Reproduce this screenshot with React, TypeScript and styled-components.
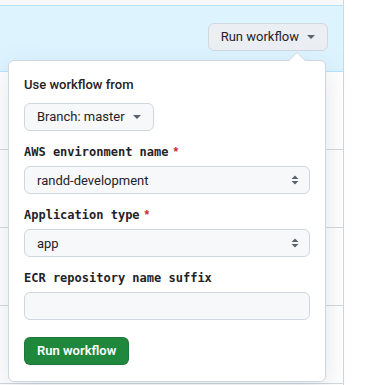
import { FC } from "react";
import styled, { createGlobalStyle } from "styled-components";

const GlobalStyle = createGlobalStyle`
  html, body {
    margin: 0;
    padding: 0;
    background: #ffffff;
  }
  body {
    font-family: Roboto, "Liberation Sans", Arial, sans-serif;
    color: #1f2328;
    font-size: 13px;
  }
`;

const colors = {
  border: "#d0d7de",
  subtle: "#f6f8fa",
  highlight: "#ddf4ff",
  highlightBorder: "#b6e3ff",
  text: "#1f2328",
  danger: "#d1242f",
  green: "#1f883d",
};

const Page = styled.div`
  display: flex;
  width: 376px;
  height: 385px;
  overflow: hidden;
`;

const Box = styled.div`
  width: 343px;
  border-right: 1px solid ${colors.border};
  display: flex;
  flex-direction: column;
`;

const BoxHeader = styled.div`
  height: 5px;
  background: ${colors.subtle};
  border-bottom: 1px solid ${colors.highlightBorder};
`;

const HighlightRow = styled.div`
  position: relative;
  height: 66px;
  box-sizing: border-box;
  background: ${colors.highlight};
  border-bottom: 1px solid ${colors.highlightBorder};
  display: flex;
  justify-content: flex-end;
  align-items: flex-start;
  padding: 17px 15px 0 0;
`;

const Row = styled.div`
  height: 77px;
  border-bottom: 1px solid ${colors.border};
`;

const Caret = styled.span`
  display: inline-block;
  width: 0;
  height: 0;
  border-left: 4px solid transparent;
  border-right: 4px solid transparent;
  border-top: 4px solid #59636e;
  margin-left: 8px;
`;

const Button = styled.button<{ $variant?: "default" | "primary" | "onHighlight" }>`
  display: inline-flex;
  align-items: center;
  height: 28px;
  padding: 0 12px;
  box-sizing: border-box;
  border-radius: 6px;
  font-family: inherit;
  font-size: 13px;
  line-height: 20px;
  cursor: pointer;
  color: ${({ $variant }) => ($variant === "primary" ? "#ffffff" : colors.text)};
  font-weight: ${({ $variant }) => ($variant === "primary" ? 600 : 400)};
  background: ${({ $variant }) =>
    $variant === "primary" ? colors.green : $variant === "onHighlight" ? "#ebeef2" : colors.subtle};
  border: 1px solid
    ${({ $variant }) => ($variant === "primary" ? "rgba(31,35,40,0.15)" : colors.border)};
`;

const Popover = styled.div`
  position: absolute;
  top: 54px;
  left: 8px;
  width: 318px;
  box-sizing: border-box;
  padding: 16px 15px 16px 15px;
  background: #ffffff;
  border: 1px solid ${colors.border};
  border-radius: 6px;
  box-shadow: 0 8px 24px rgba(140, 149, 159, 0.25);
  z-index: 10;

  &::before,
  &::after {
    content: "";
    position: absolute;
    right: 20px;
    width: 0;
    height: 0;
    border-left: 8px solid transparent;
    border-right: 8px solid transparent;
  }
  &::before {
    top: -9px;
    border-bottom: 8px solid ${colors.border};
  }
  &::after {
    top: -8px;
    border-bottom: 8px solid #ffffff;
  }
`;

const Heading = styled.div`
  font-weight: 500;
  line-height: 20px;
  margin-bottom: 8px;
  margin-top: -2px;
`;

const Field = styled.div`
  display: flex;
  flex-direction: column;
  gap: 4px;
  margin-top: 11px;
`;

const Label = styled.label`
  font-family: "DejaVu Sans Mono", "Liberation Mono", monospace;
  font-size: 12px;
  font-weight: 700;
  line-height: 20px;
  color: ${colors.text};
`;

const Required = styled.span`
  color: ${colors.danger};
  margin-left: 5px;
  font-family: "Liberation Sans", Arial, sans-serif;
`;

const Control = styled.div`
  display: flex;
  align-items: center;
  justify-content: space-between;
  height: 28px;
  box-sizing: border-box;
  padding: 0 9px 0 12px;
  background: ${colors.subtle};
  border: 1px solid ${colors.border};
  border-radius: 6px;
  font-size: 13px;
  color: ${colors.text};
`;

const Actions = styled.div`
  margin-top: 17px;
`;

const SelectArrows: FC = () => (
  <svg width="10" height="12" viewBox="0 0 10 12">
    <path d="M5 1.5 L8.5 5 L1.5 5 Z" fill="#59636e" />
    <path d="M5 10.5 L8.5 7 L1.5 7 Z" fill="#59636e" />
  </svg>
);

const App: FC = () => {
  return (
    <Page>
      <GlobalStyle />
      <Box>
        <BoxHeader />
        <HighlightRow>
          <Button $variant="onHighlight">
            Run workflow
            <Caret />
          </Button>
          <Popover>
            <Heading>Use workflow from</Heading>
            <Button>
              Branch: master
              <Caret />
            </Button>
            <Field>
              <Label>
                AWS environment name<Required>*</Required>
              </Label>
              <Control>
                randd-development
                <SelectArrows />
              </Control>
            </Field>
            <Field>
              <Label>
                Application type<Required>*</Required>
              </Label>
              <Control>
                app
                <SelectArrows />
              </Control>
            </Field>
            <Field>
              <Label>ECR repository name suffix</Label>
              <Control />
            </Field>
            <Actions>
              <Button $variant="primary">Run workflow</Button>
            </Actions>
          </Popover>
        </HighlightRow>
        <Row />
        <Row />
        <Row />
        <Row />
      </Box>
    </Page>
  );
};

export default App;
